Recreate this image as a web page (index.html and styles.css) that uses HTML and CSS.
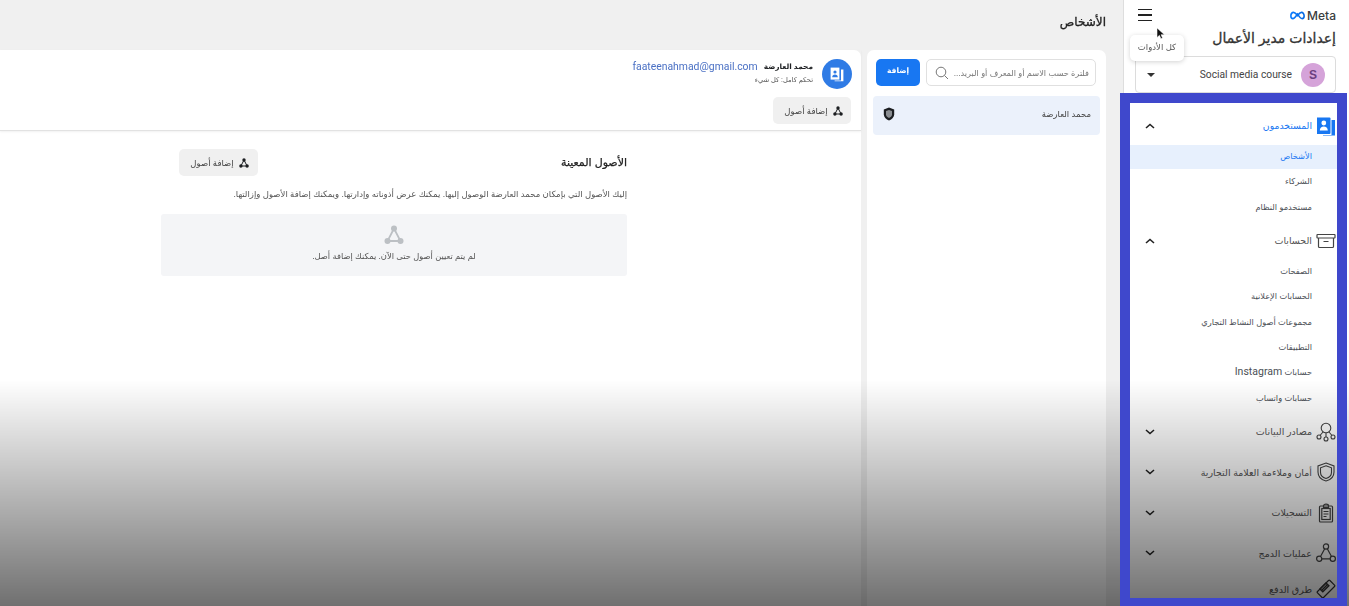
FILE: index.html
```html
<!DOCTYPE html>
<html lang="ar" dir="rtl">
<head>
<meta charset="utf-8">
<title>إعدادات مدير الأعمال</title>
<link rel="stylesheet" href="styles.css">
</head>
<body>
<div class="app">
  <aside class="sidebar">
    <div class="side-top">
      <div class="brand-row">
        <div class="brand" dir="ltr">
          <svg class="meta-mark" viewBox="0 0 26 14" width="16" height="9"><defs><linearGradient id="mg" x1="0" x2="1" y1="0" y2="0"><stop offset="0" stop-color="#0a7cff"/><stop offset="1" stop-color="#0668e1"/></linearGradient></defs><path d="M13 7C10.500 3.500 8.600 1.500 6.200 1.500 3.400 1.500 1.500 4.500 1.500 8 1.500 10.800 2.900 12.500 5 12.500 7.800 12.500 9.800 9 13 4.500 16 9 18.200 12.500 21 12.500 23.100 12.500 24.500 10.800 24.500 8 24.500 4.500 22.600 1.500 19.800 1.500 17.400 1.500 15.500 3.500 13 7Z" fill="none" stroke="url(#mg)" stroke-width="2.800"/></svg>
          <span class="meta-word">Meta</span>
        </div>
        <button class="menu-btn" aria-label="كل الأدوات"><span></span><span></span><span></span></button>
      </div>
      <h1 class="side-title">إعدادات مدير الأعمال</h1>
      <div class="account">
        <span class="account-avatar">S</span>
        <span class="account-name" dir="ltr">Social media course</span>
        <span class="caret"></span>
      </div>
    </div>
    <nav class="nav">
      <section class="nav-section">
        <div class="nav-head active">
          <svg class="nav-icon" viewBox="0 0 20 20"><path d="M1 1.500h12.500a1 1 0 0 1 1 1V17a1 1 0 0 1-1 1H1z" fill="#1877f2"/><path d="M15.500 4H19v15.500H7V19h8.500z" fill="#1877f2"/><circle cx="7.800" cy="7" r="2.400" fill="#fff"/><path d="M3.800 14.500c0-2.700 1.800-4 4-4s4 1.300 4 4z" fill="#fff"/></svg>
          <span class="nav-label">المستخدمون</span>
          <svg class="chev" viewBox="0 0 10 6"><path d="M1 5l4-3.500L9 5" /></svg>
        </div>
        <a class="sub current">الأشخاص</a>
        <a class="sub">الشركاء</a>
        <a class="sub">مستخدمو النظام</a>
      </section>
      <section class="nav-section accounts">
        <div class="nav-head">
          <svg class="nav-icon" viewBox="0 0 20 20"><g fill="none" stroke="#444" stroke-width="1.200"><rect x="1" y="3.500" width="18" height="3.500" rx=".5"/><path d="M2.500 7v8.500a1 1 0 0 0 1 1h13a1 1 0 0 0 1-1V7M7.500 10.500h5"/></g></svg>
          <span class="nav-label">الحسابات</span>
          <svg class="chev" viewBox="0 0 10 6"><path d="M1 5l4-3.500L9 5" /></svg>
        </div>
        <a class="sub">الصفحات</a>
        <a class="sub">الحسابات الإعلانية</a>
        <a class="sub">مجموعات أصول النشاط التجاري</a>
        <a class="sub">التطبيقات</a>
        <a class="sub">حسابات <span class="latin">Instagram</span></a>
        <a class="sub">حسابات واتساب</a>
      </section>
      <section class="nav-section collapsed">
        <div class="nav-head">
          <svg class="nav-icon" viewBox="0 0 20 20"><g fill="none" stroke="#444" stroke-width="1.100"><circle cx="10" cy="6" r="4.800"/><circle cx="3" cy="15" r="2"/><circle cx="10" cy="17" r="2"/><circle cx="17" cy="15" r="2"/><path d="M10 11v4M7 10l-3 3.500M13 10l3 3.500"/></g></svg>
          <span class="nav-label">مصادر البيانات</span>
          <svg class="chev" viewBox="0 0 10 6"><path d="M1 1l4 3.500L9 1" /></svg>
        </div>
      </section>
      <section class="nav-section collapsed">
        <div class="nav-head">
          <svg class="nav-icon" viewBox="0 0 20 20"><g fill="none" stroke="#444" stroke-width="1.100"><path d="M10 1l8 3v6c0 4.500-3.200 7.800-8 9-4.800-1.200-8-4.500-8-9V4z"/><path d="M10 3.800l5.500 2v4.400c0 3-2.100 5.300-5.500 6.300-3.400-1-5.500-3.300-5.500-6.300V5.800z"/></g></svg>
          <span class="nav-label">أمان وملاءمة العلامة التجارية</span>
          <svg class="chev" viewBox="0 0 10 6"><path d="M1 1l4 3.500L9 1" /></svg>
        </div>
      </section>
      <section class="nav-section collapsed">
        <div class="nav-head">
          <svg class="nav-icon" viewBox="0 0 20 20"><g fill="none" stroke="#444" stroke-width="1.200"><rect x="3.500" y="3" width="13" height="16" rx="1"/><rect x="5.800" y="5.500" width="8.400" height="11"/><path d="M7.500 3c0-1 1-1.800 2.500-1.800s2.500.8 2.500 1.800v1.500h-5zM7.500 8.500h5M7.500 11h5M7.500 13.500h3"/></g></svg>
          <span class="nav-label">التسجيلات</span>
          <svg class="chev" viewBox="0 0 10 6"><path d="M1 1l4 3.500L9 1" /></svg>
        </div>
      </section>
      <section class="nav-section collapsed">
        <div class="nav-head">
          <svg class="nav-icon" viewBox="0 0 20 20"><g fill="none" stroke="#444" stroke-width="1.200"><circle cx="10" cy="3.500" r="2.600"/><circle cx="3.200" cy="15.800" r="2.600"/><circle cx="16.800" cy="15.800" r="2.600"/><path d="M8.700 5.800L4.500 13.500M11.300 5.800l4.200 7.700M5.800 15.800h8.400"/></g></svg>
          <span class="nav-label">عمليات الدمج</span>
          <svg class="chev" viewBox="0 0 10 6"><path d="M1 1l4 3.500L9 1" /></svg>
        </div>
      </section>
      <section class="nav-section last">
        <div class="nav-head">
          <svg class="nav-icon" viewBox="0 0 20 20"><g fill="none" stroke="#333" stroke-width="1.200"><path d="M1.500 12.500L12.500 1.500a1 1 0 0 1 1.400 0l4.600 4.600a1 1 0 0 1 0 1.400L7.500 18.500a1 1 0 0 1-1.400 0l-4.600-4.600a1 1 0 0 1 0-1.400z"/></g><path d="M4 10L10 4l2.800 2.800-6 6zM5.500 11.500L11.500 5.500" stroke="#333" stroke-width="1.500" fill="none"/></svg>
          <span class="nav-label">طرق الدفع</span>
        </div>
      </section>
    </nav>
  </aside>

  <main class="main">
    <h2 class="page-title">الأشخاص</h2>
    <div class="panels">
      <section class="list-panel">
        <div class="list-tools">
          <div class="search">
            <span class="search-text">فلترة حسب الاسم أو المعرف أو البريد...</span>
            <svg class="search-icon" viewBox="0 0 14 14"><circle cx="6" cy="6" r="4.800" fill="none" stroke="#777" stroke-width="1"/><path d="M9.500 9.500L13 13" stroke="#777" stroke-width="1"/></svg>
          </div>
          <button class="add-btn">إضافة</button>
        </div>
        <div class="person-row">
          <span class="person-name">محمد العارضة</span>
          <svg class="shield" viewBox="0 0 12 14"><path d="M6 .5l5.200 2v4.700c0 3-2.200 5.200-5.200 6.300C3 12.400.800 10.200.800 7.200V2.500z" fill="#1c1e21"/><path d="M6 3l3 1.100v3.200c0 1.800-1.200 3-3 3.700-1.800-.7-3-1.900-3-3.700V4.100z" fill="#8a8d91"/></svg>
        </div>
      </section>

      <section class="detail-panel">
        <header class="detail-head">
          <div class="person-line">
            <span class="big-avatar">
              <svg viewBox="0 0 20 20" width="16" height="16"><path d="M2 2h11v15H2z" fill="#fff"/><path d="M15 4.500h3V19H7v-1h8z" fill="#fff"/><circle cx="7.500" cy="7.500" r="2" fill="#2f7be5"/><path d="M4 14c0-2.400 1.500-3.500 3.500-3.500S11 11.600 11 14z" fill="#2f7be5"/></svg>
            </span>
            <div class="person-info">
              <div class="name-line"><b class="detail-name">محمد العارضة</b><span class="detail-email" dir="ltr">faateenahmad@gmail.com</span></div>
              <div class="detail-role">تحكم كامل: كل شيء</div>
            </div>
          </div>
          <button class="ghost-btn head-btn">
            <svg class="nodes" viewBox="0 0 10 10"><use href="#nodes-shape"/></svg>
            إضافة أصول
          </button>
        </header>
        <div class="assets">
          <div class="assets-top">
            <h3 class="assets-title">الأصول المعينة</h3>
            <button class="ghost-btn">
              <svg class="nodes" viewBox="0 0 10 10"><use href="#nodes-shape"/></svg>
              إضافة أصول
            </button>
          </div>
          <p class="assets-desc">إليك الأصول التي بإمكان محمد العارضة الوصول إليها. يمكنك عرض أذوناته وإدارتها. ويمكنك إضافة الأصول وإزالتها.</p>
          <div class="empty">
            <svg class="empty-icon" viewBox="0 0 20 20"><g fill="#bcc0c4"><circle cx="10" cy="3.500" r="3"/><circle cx="3.500" cy="16" r="3"/><circle cx="16.500" cy="16" r="3"/></g><path d="M10 3.500L3.500 16h13z" fill="none" stroke="#bcc0c4" stroke-width="1.800"/></svg>
            <p class="empty-text">لم يتم تعيين أصول حتى الآن. يمكنك إضافة أصل.</p>
          </div>
        </div>
      </section>
    </div>
  </main>
</div>

<svg class="defs" width="0" height="0"><defs><g id="nodes-shape"><circle cx="5" cy="2" r="1.700" fill="#1c1e21"/><circle cx="1.900" cy="8" r="1.700" fill="#1c1e21"/><circle cx="8.100" cy="8" r="1.700" fill="#1c1e21"/><path d="M5 2L1.900 8h6.200z" fill="none" stroke="#1c1e21" stroke-width="1"/></g></defs></svg>

<div class="fade"></div>
<div class="frame"></div>
<div class="tooltip">كل الأدوات</div>
<svg class="pointer" viewBox="0 0 10 16" width="9" height="14"><path d="M1 1v11l2.800-2.500 1.700 4 1.800-.8-1.700-3.900H9.500z" fill="#111" stroke="#fff" stroke-width=".6"/></svg>
</body>
</html>
```
FILE: styles.css
```css
* { box-sizing: border-box; }
html, body { margin: 0; height: 606px; overflow: hidden; background: #f0f0f0; }
body { font-family: "Liberation Sans", "DejaVu Sans", sans-serif; color: #1c1e21; position: relative; width: 1349px; }
button { font-family: inherit; border: 0; padding: 0; }
h1, h2, h3, p { margin: 0; }
.defs { position: absolute; }

.app { display: flex; width: 1349px; height: 606px; filter: blur(.4px); }

/* sidebar */
.sidebar { width: 226px; flex: none; background: #fff; border-left: 1px solid #dedede; padding: 0 12px 0 0; overflow: hidden; }
.side-top { height: 103px; padding: 0 1px 0 11px; }
.brand-row { display: flex; justify-content: space-between; align-items: center; height: 30px; }
.brand { display: flex; align-items: center; gap: 2px; }
.meta-word { font: 500 12px "Inter", "Liberation Sans", sans-serif; color: #3a3d40; }
.meta-mark { width: 15px; }
.menu-btn { width: 14px; margin-left: 3px; display: flex; flex-direction: column; gap: 4px; background: none; }
.menu-btn span { display: block; height: 1.500px; background: #222; }
.side-title { font-size: 14px; font-weight: 400; -webkit-text-stroke: .3px #333; color: #333; height: 26px; line-height: 17px; }
.account { display: flex; align-items: center; height: 37px; border: 1px solid #dcdcdc; border-radius: 4px; padding: 0 10px; gap: 9px; }
.account-avatar { width: 24px; height: 24px; border-radius: 50%; background: #d5a3d9; color: #6b3f7f; font: 700 12px "Liberation Sans", sans-serif; display: flex; align-items: center; justify-content: center; }
.account-name { font: 10.250px "Roboto", sans-serif; color: #444; }
.caret { margin-right: auto; width: 0; height: 0; border-style: solid; border-width: 4px 4px 0; border-color: #333 transparent transparent; margin-left: 1px; }

.nav { margin-left: 6px; padding-top: 6px; }
.nav-head { display: flex; align-items: center; height: 36px; padding-left: 15px; }
.nav-head.active { padding-bottom: 3px; }
.nav-icon { width: 20px; height: 20px; flex: none; margin-right: 1px; }
.nav-label { font-size: 9.500px; color: #555; margin-right: 4px; }
.nav-head.active .nav-label { color: #1877f2; font-size: 9.250px; }
.chev { width: 10px; height: 6px; margin-right: auto; fill: none; stroke: #222; stroke-width: 1.600; }
.sub { display: block; height: 24px; margin-bottom: 1.400px; line-height: 24px; padding-right: 25px; font-size: 8.250px; color: #4b4f56; }
.sub.current { background: #e7f0fd; color: #1877f2; }
.latin { font: 10.500px "Roboto", sans-serif; }
.nav-section { margin-top: 3px; }
.nav-section:first-child { margin-top: 0; }
.accounts .nav-head { height: 37px; padding-bottom: 1px; }
.nav-section.collapsed { margin-top: 3px; }
.nav-section.collapsed + .collapsed { margin-top: 4.500px; }
.nav-section.last { margin-top: 0; }

/* main */
.main { flex: 1; min-width: 0; padding: 0 17px 0 0; display: flex; flex-direction: column; }
.page-title { font-size: 12px; font-weight: 400; -webkit-text-stroke: .3px #222; height: 50px; padding-top: 14px; line-height: 16px; color: #222; }
.panels { display: flex; gap: 6px; flex: 1; min-height: 0; }
.list-panel { width: 239px; flex: none; background: #fff; border-radius: 7px 7px 0 0; padding: 9px 6px 0; }
.list-tools { display: flex; gap: 6px; height: 27px; padding: 0 4px 0 3px; }
.search { flex: 1; border: 1px solid #e0e0e0; border-radius: 5px; display: flex; align-items: center; padding: 0 6px; justify-content: space-between; }
.search-text { font-size: 8.200px; color: #777; white-space: nowrap; }
.search-icon { width: 14px; height: 14px; flex: none; margin-left: 2px; }
.add-btn { width: 44px; background: #1877f2; color: #fff; font-size: 7.500px; font-weight: 700; border-radius: 5px; padding-bottom: 4px; }
.person-row { margin-top: 10px; height: 39px; background: #ebf1fb; border-radius: 4px; display: flex; align-items: center; justify-content: space-between; padding: 0 9px 3px 10px; }
.person-name { font-size: 8.500px; color: #444; }
.shield { width: 12px; height: 14px; }

.detail-panel { flex: 1; min-width: 0; background: #fff; border-radius: 0 7px 0 0; }
.detail-head { height: 81px; padding: 9px 9px 0 0; border-bottom: 1px solid #e2e2e2; box-shadow: 0 1px 2px rgba(0,0,0,.06); }
.person-line { display: flex; gap: 9px; align-items: flex-start; height: 38px; }
.big-avatar { width: 30px; height: 30px; border-radius: 50%; background: #2f7be5; display: flex; align-items: center; justify-content: center; flex: none; }
.name-line { display: flex; gap: 6px; align-items: center; height: 15px; }
.detail-name { font-size: 7.400px; }
.detail-email { font: 10.400px "Roboto", sans-serif; color: #4a70c4; }
.detail-role { font-size: 6.700px; color: #555; margin-top: 2px; }
.ghost-btn { display: inline-flex; align-items: center; justify-content: center; gap: 5px; width: 79px; height: 27px; background: #f0f0f0; border-radius: 5px; padding-left: 2px; font-size: 8.500px; color: #444; }
.head-btn { width: 78px; margin-right: 1px; padding-left: 3px; }
.nodes { width: 10px; height: 10px; flex: none; }
.assets { width: 466px; margin-right: 234px; padding-top: 18px; }
.assets-top { display: flex; justify-content: space-between; align-items: center; padding-left: 18px; height: 27px; }
.assets-title { font-size: 11px; font-weight: 400; -webkit-text-stroke: .25px #222; color: #222; }
.assets-desc { font-size: 8.500px; color: #555; margin-top: 11px; line-height: 14px; white-space: nowrap; }
.empty { margin-top: 13px; height: 62px; background: #f4f5f7; border-radius: 3px; display: flex; flex-direction: column; align-items: center; padding-top: 11px; }
.empty-icon { width: 20px; height: 20px; }
.empty-text { font-size: 8.300px; color: #555; margin-top: 6px; }

/* overlays */
.fade { position: absolute; left: 0; right: 0; top: 380px; height: 226px; background: linear-gradient(to bottom, rgba(0,0,0,0), rgba(0,0,0,.56)); }
.frame { position: absolute; left: 1120px; top: 93px; width: 227px; height: 513px; border: solid #3f48cc; border-width: 10px 10px 8px; }
.tooltip { position: absolute; left: 1130px; top: 35px; width: 54px; height: 26px; background: #fff; border-radius: 5px; box-shadow: 0 1px 5px rgba(0,0,0,.18); font-size: 8.500px; color: #555; display: flex; align-items: center; justify-content: center; padding-bottom: 2px; }
.pointer { position: absolute; left: 1156px; top: 27px; }
```
